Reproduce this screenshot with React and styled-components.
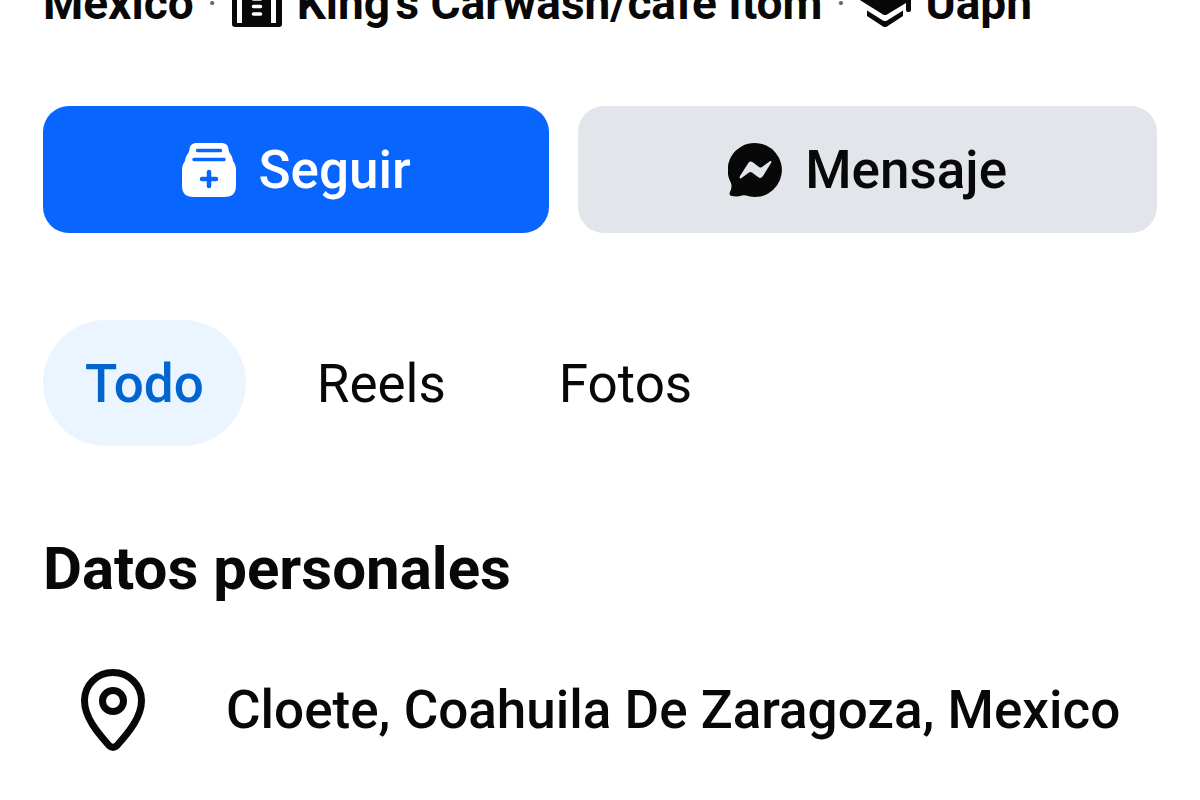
import styled, { createGlobalStyle } from 'styled-components'

const GlobalStyle = createGlobalStyle`
* {
box-sizing: border-box;
}
body {
margin: 0;
background-color: #ffffff;
color: #080809;
font-family: Roboto, sans-serif;
}
`

const Container = styled.main`
padding: 0 43px;
`

const Intro = styled.div`
display: flex;
align-items: flex-end;
height: 34px;
overflow: hidden;
white-space: nowrap;
`

const IntroText = styled.span`
flex: none;
font-size: 46px;
line-height: 62px;
font-weight: 700;
`

const Dot = styled.span`
flex: none;
width: 37px;
text-align: center;
font-size: 36px;
line-height: 60px;
color: #65686c;
`

const IntroIcon = styled.svg`
flex: none;
width: 52px;
height: 52px;
margin-bottom: 7px;
margin-right: 14px;
`

const Actions = styled.div`
display: flex;
gap: 29px;
margin-top: 72px;
`

const Action = styled.button`
display: flex;
flex: ${(props) => props.$grow} 1 0;
align-items: center;
justify-content: center;
gap: 23px;
height: 127px;
padding: 0;
border: none;
border-radius: 26px;
background-color: ${(props) => (props.$primary ? '#0866ff' : '#e2e5e9')};
color: ${(props) => (props.$primary ? '#ffffff' : '#080809')};
font-family: inherit;
font-size: 53px;
font-weight: 500;
line-height: 60px;
`

const ActionIcon = styled.svg`
width: 54px;
height: 54px;
`

const Tabs = styled.nav`
display: flex;
gap: 29px;
margin-top: 87px;
`

const Tab = styled.button`
height: 126px;
padding: 2px 42px 0;
border: none;
border-radius: 63px;
background-color: ${(props) => (props.$active ? '#ebf5ff' : 'transparent')};
color: ${(props) => (props.$active ? '#0064d1' : '#080809')};
font-family: inherit;
font-size: 53px;
font-weight: ${(props) => (props.$active ? 500 : 400)};
line-height: 60px;
`

const Heading = styled.h2`
margin: 88px 0 0;
font-size: 60px;
font-weight: 700;
line-height: 70px;
`

const Detail = styled.div`
display: flex;
align-items: center;
margin-top: 65px;
padding-left: 38px;
font-size: 53px;
font-weight: 500;
line-height: 82px;
`

const PinIcon = styled.svg`
flex: none;
width: 64px;
height: 82px;
margin-right: 81px;
`

const App = () => {
    return (
        <>
            <GlobalStyle />
            <Container>
                <Intro>
                    <IntroText>Mexico</IntroText>
                    <Dot>·</Dot>
                    <IntroIcon viewBox="0 0 52 52" aria-hidden="true">
                        <path d="M13 3h26v11h9a3 3 0 0 1 3 3v32a3 3 0 0 1-3 3H4a3 3 0 0 1-3-3V17a3 3 0 0 1 3-3h9z" fill="#080809" />
                        <path d="M8.500 20v28M42.500 20v28" stroke="#ffffff" strokeWidth="5" />
                        <path d="M22.500 24h7M22.500 31.500h7M22.500 39h7" stroke="#ffffff" strokeWidth="3.500" strokeLinecap="round" />
                    </IntroIcon>
                    <IntroText>King's Carwash/cafe Itom</IntroText>
                    <Dot>·</Dot>
                    <IntroIcon viewBox="0 0 52 52" aria-hidden="true">
                        <path d="M26 5L52 21V35q0 2-2 2h-1q-2 0-2-2V28L28 39.500q-2 1-4 0L0 24.500V21z" fill="#080809" />
                        <path d="M8 35.500L24 45.500q2 1 4 0L44 35.500V41L28 51.500q-2 1-4 0L8 41z" fill="#080809" />
                    </IntroIcon>
                    <IntroText>Uaph</IntroText>
                </Intro>
                <Actions>
                    <Action $primary $grow={7}>
                        <ActionIcon viewBox="0 0 54 54" aria-hidden="true">
                            <path d="M15 0h24c4.500 0 7 2 7.500 6 .3 2.500 1 4 2.500 6 1.500 2 1.500 4 2 6 2 2.500 3 5.500 3 9v15c0 8.500-3.500 12-12 12H12C3.500 54 0 50.500 0 42V27c0-3.500 1-6.500 3-9 .5-2 .5-4 2-6 1.500-2 2.200-3.500 2.500-6C8 2 10.500 0 15 0z" fill="#ffffff" />
                            <path d="M15.500 7.500h23M12 16.500h30" stroke="#0866ff" strokeWidth="3.500" strokeLinecap="round" />
                            <path d="M27 29v14M20 36h14" stroke="#0866ff" strokeWidth="4.500" strokeLinecap="round" />
                        </ActionIcon>
                        Seguir
                    </Action>
                    <Action $grow={8}>
                        <ActionIcon viewBox="0 0 54 54" aria-hidden="true">
                            <path d="M27 0a27 27 0 1 1-9 52.500c-1.500-.5-2.500-.5-4 0-3 1-6.500 1.300-10 .5-2.500-.5-3-2-2-4 1.500-3 2-6 1-9A27 27 0 0 1 27 0z" fill="#080809" />
                            <path d="M12 33l8-12.500c1.500-2.300 3-2.500 5-1l6 4.500c1 .8 2 .8 3 0l7.500-5.500c1.500-1 2.500 0 1.500 1.500L35 33c-1.500 2.300-3 2.500-5 1l-6-4.500c-1-.8-2-.8-3 0L13.500 35c-1.500 1-2.500 0-1.500-2z" fill="#e2e5e9" />
                        </ActionIcon>
                        Mensaje
                    </Action>
                </Actions>
                <Tabs>
                    <Tab $active>Todo</Tab>
                    <Tab>Reels</Tab>
                    <Tab>Fotos</Tab>
                </Tabs>
                <Heading>Datos personales</Heading>
                <Detail>
                    <PinIcon viewBox="0 0 64 82" fill="none" stroke="#080809" aria-hidden="true">
                        <path d="M32 3.500C16 3.500 3.500 16 3.500 31.500C3.500 48 16 63 28 76.500C30.500 79 33.500 79 36 76.500C48 63 60.500 48 60.500 31.500C60.500 16 48 3.500 32 3.500z" strokeWidth="7" />
                        <circle cx="32" cy="32" r="10.500" strokeWidth="7" />
                    </PinIcon>
                    <span>Cloete, Coahuila De Zaragoza, Mexico</span>
                </Detail>
            </Container>
        </>
    )
}

export default App
